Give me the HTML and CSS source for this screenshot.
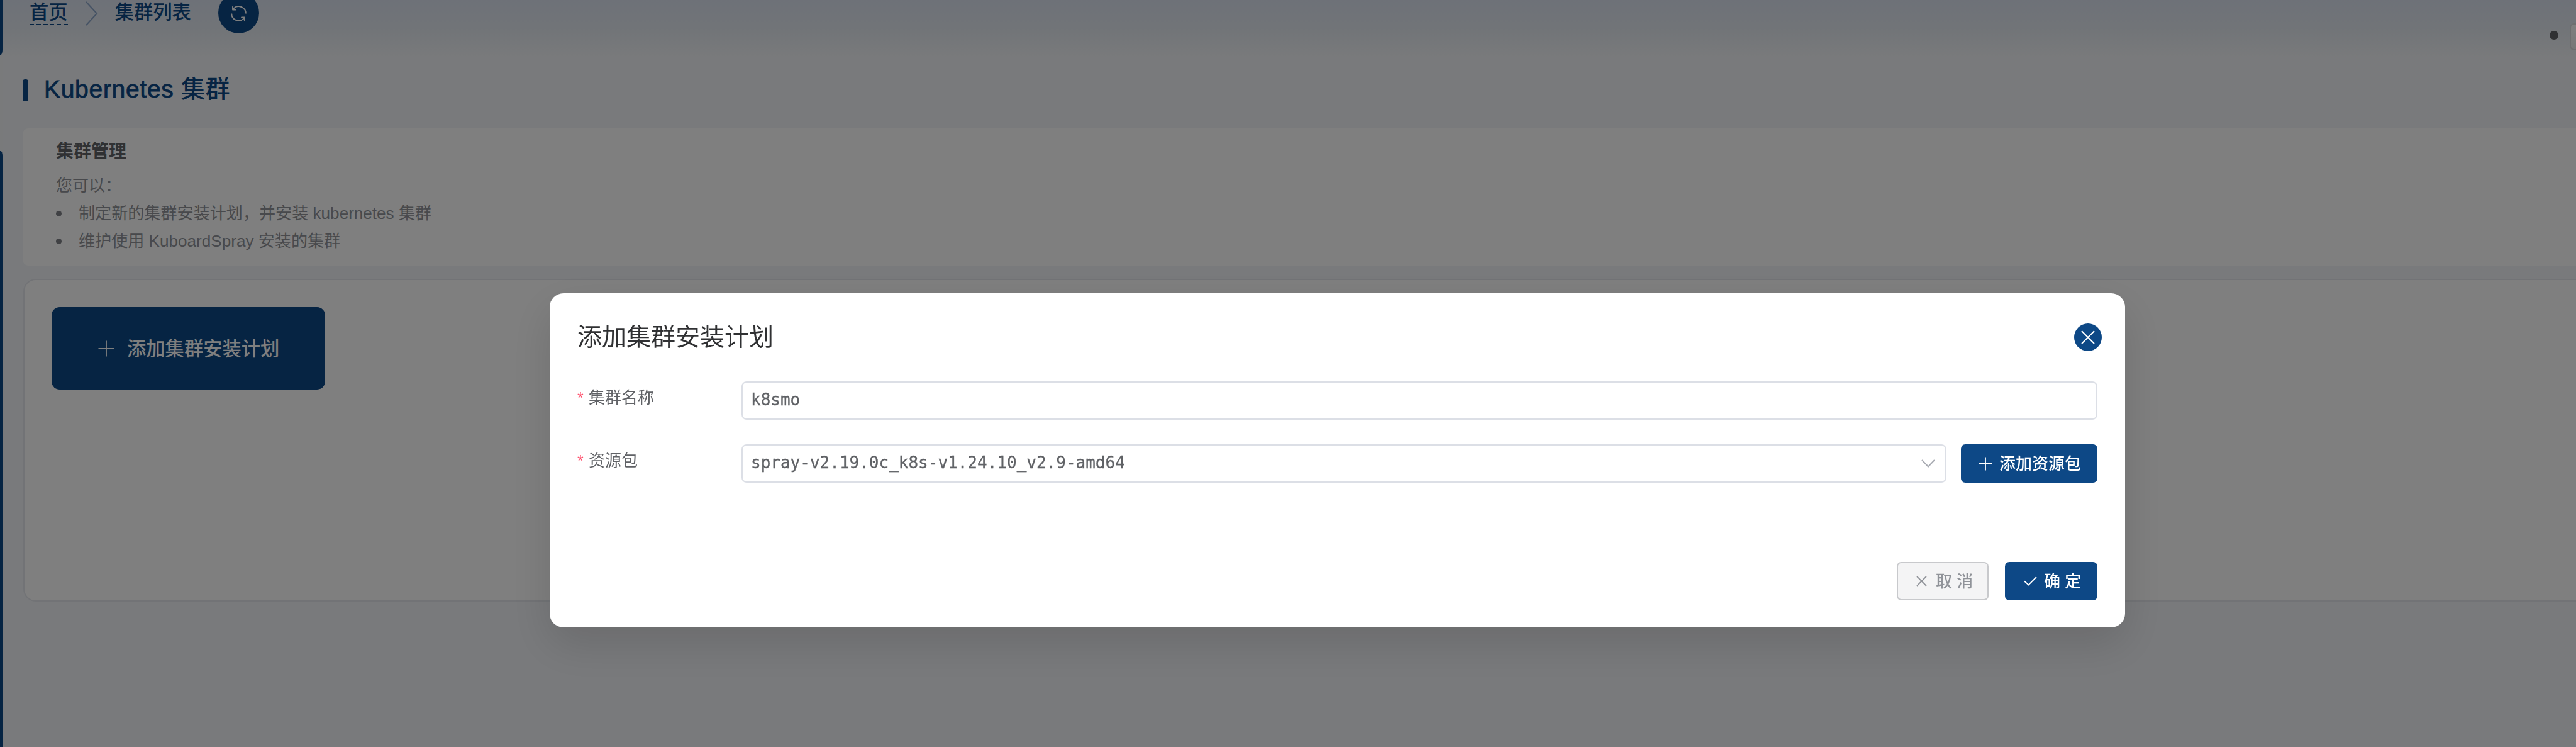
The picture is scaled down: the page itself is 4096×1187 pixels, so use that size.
FILE: index.html
```html
<!DOCTYPE html>
<html lang="zh-CN">
<head>
<meta charset="utf-8">
<title>Kubernetes 集群</title>
<link rel="stylesheet" href="styles.css">
</head>
<body>
<div class="app">
  <aside class="rail"><span class="rail-top"></span><span class="rail-bottom"></span></aside>
  <main class="main">
    <header class="topbar">
      <nav class="crumbs">
        <a class="crumb crumb-link">首页</a>
        <svg class="crumb-sep" viewBox="0 0 22 40"><path d="M2 2L19 20.500L2 39"/></svg>
        <span class="crumb">集群列表</span>
        <span class="refresh">
          <svg viewBox="0 0 1024 1024"><path d="M771.776 794.880A384 384 0 0 1 128 512h64a320 320 0 0 0 555.712 216.448H654.720a32 32 0 1 1 0-64h149.056a32 32 0 0 1 32 32v148.928a32 32 0 1 1-64 0v-50.560zM276.288 295.616h92.992a32 32 0 0 1 0 64H220.160a32 32 0 0 1-32-32V178.560a32 32 0 0 1 64 0v50.560A384 384 0 0 1 896.128 512h-64a320 320 0 0 0-555.776-216.384z"/></svg>
        </span>
      </nav>
      <div class="tools"><span class="dot"></span><span class="tool-box"></span></div>
    </header>
    <h1 class="page-title"><span class="title-bar"></span><span class="title-text"><span class="latin">Kubernetes</span>集群</span></h1>
    <section class="info">
      <h2 class="info-title">集群管理</h2>
      <p class="info-line">您可以：</p>
      <ul class="info-list">
        <li>制定新的集群安装计划，并安装 kubernetes 集群</li>
        <li>维护使用 KuboardSpray 安装的集群</li>
      </ul>
    </section>
    <section class="clusters">
      <button class="add-plan">
        <svg class="plus" viewBox="0 0 26 26"><path d="M13 0.500V25.500M.5 13H25.500"/></svg>
        <span>添加集群安装计划</span>
      </button>
    </section>
  </main>
</div>
<div class="overlay">
  <div class="dialog">
    <div class="dialog-head">
      <span class="dialog-title">添加集群安装计划</span>
      <span class="close"><svg viewBox="0 0 22 22"><path d="M1 1L21 21M21 1L1 21"/></svg></span>
    </div>
    <div class="row">
      <label class="label"><i>*</i>集群名称</label>
      <div class="field"><span>k8smo</span></div>
    </div>
    <div class="row">
      <label class="label"><i>*</i>资源包</label>
      <div class="field"><span>spray-v2.19.0c_k8s-v1.24.10_v2.9-amd64</span>
        <svg class="arrow" viewBox="0 0 22 13"><path d="M1 1L11 11.500L21 1"/></svg>
      </div>
      <button class="btn primary add-res"><svg class="ico-plus" viewBox="0 0 22 22"><path d="M11 .5V21.500M.5 11H21.500"/></svg><span>添加资源包</span></button>
    </div>
    <div class="dialog-foot">
      <button class="btn cancel"><svg class="ico-x" viewBox="0 0 17 17"><path d="M1 1L16 16M16 1L1 16"/></svg><span>取 消</span></button>
      <button class="btn primary ok"><svg class="ico-check" viewBox="0 0 21 15"><path d="M1 7.500L7.500 13.500L20 1"/></svg><span>确 定</span></button>
    </div>
  </div>
</div>
</body>
</html>
```

FILE: styles.css
```css
* { box-sizing: border-box; }
html, body { margin: 0; height: 100%; overflow: hidden; }
body {
  font-family: "Liberation Sans", "Noto Sans CJK SC", sans-serif;
  font-size: 26px;
  color: #606266;
  background: #f3f5f9;
}
h1, h2, p, ul { margin: 0; padding: 0; }
svg { display: block; fill: none; flex: none; }
button { font: inherit; border: 0; margin: 0; padding: 0; }

.app { display: flex; width: 4096px; height: 1187px; overflow: hidden; }
.rail { width: 3.5px; flex: none; display: flex; flex-direction: column; justify-content: space-between; background: #f3f4f6; }
.rail-top { height: 87px; background: #0d4886; border-bottom-right-radius: 3px 8px; }
.rail-bottom { height: 947px; background: #0d4886; border-top-right-radius: 3px 8px; }
.main {
  flex: 1;
  min-width: 0;
  padding-left: 32.5px;
  background: linear-gradient(#dce3f0, #e3e9f0 45px, #f3f5f8 92px) no-repeat 0 0 / 100% 92px, #f3f5f8;
}

.topbar { height: 113px; display: flex; justify-content: space-between; align-items: flex-start; }
.crumbs { display: flex; align-items: center; height: 65px; margin-top: -12px; padding-left: 11px; color: #0d4886; }
.crumb { font-size: 30.300px; font-weight: 500; line-height: 34px; height: 38px; padding-top: 1px; }
.crumb-link { background: repeating-linear-gradient(90deg, #0d4886 0 7px, transparent 7px 10.800px) no-repeat 0 100% / 100% 2px; }
.crumb-sep { width: 22px; height: 40px; margin: 0 26px 0 27px; stroke: #8ba5c9; stroke-width: 2; }
.refresh { width: 65px; height: 65px; margin-left: 43px; border-radius: 50%; background: #0d4886; display: flex; align-items: center; justify-content: center; }
.refresh svg { width: 33px; height: 33px; fill: #fff; margin-top: 2px; }
.tools { display: flex; align-items: center; gap: 18px; margin-top: 37px; }
.dot { width: 14px; height: 14px; border-radius: 50%; background: #606266; margin-top: -6px; }
.tool-box { width: 30px; height: 43px; margin-right: -20px; border: 2px solid #dcdcde; border-radius: 7px; background: linear-gradient(#fff, #f0f0f0); }

.page-title { display: flex; align-items: center; height: 60px; margin-bottom: 31px; font-size: 39px; font-weight: 500; color: #0d4886; }
.title-bar { width: 9px; height: 35px; margin-right: 25px; border-radius: 4px; background: #0d4886; }
.title-text { line-height: 56px; padding-bottom: 3px; }
.latin { -webkit-text-stroke: .8px #0d4886; letter-spacing: .7px; margin-right: 11px; }

.info { height: 218px; padding: 17px 53px; background: #fff; border-radius: 9px 0 0 9px; color: #909399; }
.info-title { font-size: 28px; line-height: 40px; font-weight: 700; color: #606266; }
.info-line { line-height: 44px; margin-top: 12px; }
.info-list { list-style: none; line-height: 44px; font-size: 26.100px; }
.info-list li { display: flex; align-items: center; white-space: pre; }
.info-list li::before { content: ""; width: 9px; height: 9px; margin-right: 27px; border-radius: 50%; background: #808389; }

.clusters { height: 513px; margin: 21px 0 0 1px; padding: 43px 43px; background: #fff; border: 2px solid #e4e7ed; border-right: 0; border-radius: 20px 0 0 20px; }
.add-plan { display: flex; align-items: center; width: 435px; height: 131px; padding-left: 74px; gap: 20px; border-radius: 13px; background: #0d4886; color: #fff; font-size: 30.300px; font-weight: 500; white-space: nowrap; }
.plus { width: 26px; height: 26px; stroke: #fff; stroke-width: 1.800; }

.overlay { position: fixed; inset: 0; background: rgba(0, 0, 0, .5); }
.dialog { width: 2505px; height: 531px; margin: 466px 0 0 874px; padding: 43px 44px; background: #fff; border-radius: 22px; box-shadow: 0 26px 70px 0 rgba(0, 0, 0, .13); }
.dialog-head { display: flex; justify-content: space-between; align-items: center; height: 54px; margin-right: -7px; }
.dialog-title { font-size: 39px; line-height: 54px; color: #303133; }
.close { width: 44px; height: 44px; border-radius: 50%; background: #0d4886; display: flex; align-items: center; justify-content: center; }
.close svg { width: 22px; height: 22px; stroke: #fff; stroke-width: 2; }

.row { display: flex; height: 61px; margin-top: 39px; }
.dialog-head + .row { margin-top: 43px; }
.label { width: 261px; flex: none; line-height: 52px; display: flex; }
.label i { font-style: normal; color: #ff4d6a; width: 18px; font-size: 25px; line-height: 53px; }
.field { flex: 1; display: flex; align-items: center; justify-content: space-between; padding: 0 16px 0 13px; border: 2px solid #dcdfe6; border-radius: 8px; font-family: "DejaVu Sans Mono", "Liberation Mono", monospace; font-size: 26px; }
.field span { padding-bottom: 3px; -webkit-text-stroke: .3px #606266; }
.arrow { width: 22px; height: 13px; stroke: #a8abb2; stroke-width: 2; }

.btn { display: flex; align-items: center; height: 61px; border-radius: 7px; font-weight: 500; white-space: nowrap; }
.primary { background: #0d4886; color: #fff; stroke: #fff; stroke-width: 1.800; }
.add-res { width: 217px; margin-left: 23px; padding-left: 28px; gap: 11px; }
.ico-plus { width: 22px; height: 22px; }
.dialog-foot { display: flex; justify-content: flex-end; gap: 26px; margin-top: 126px; }
.cancel { width: 146px; padding-left: 29px; gap: 14px; background: #f4f4f5; border: 2px solid #c8c9cc; color: #909399; stroke: #909399; stroke-width: 1.800; }
.ok { width: 147px; padding-left: 30px; gap: 11px; }
.ico-x { width: 17px; height: 17px; }
.ico-check { width: 21px; height: 15px; }
.btn span, .add-plan span { stroke: none; padding-bottom: 4px; }
```
